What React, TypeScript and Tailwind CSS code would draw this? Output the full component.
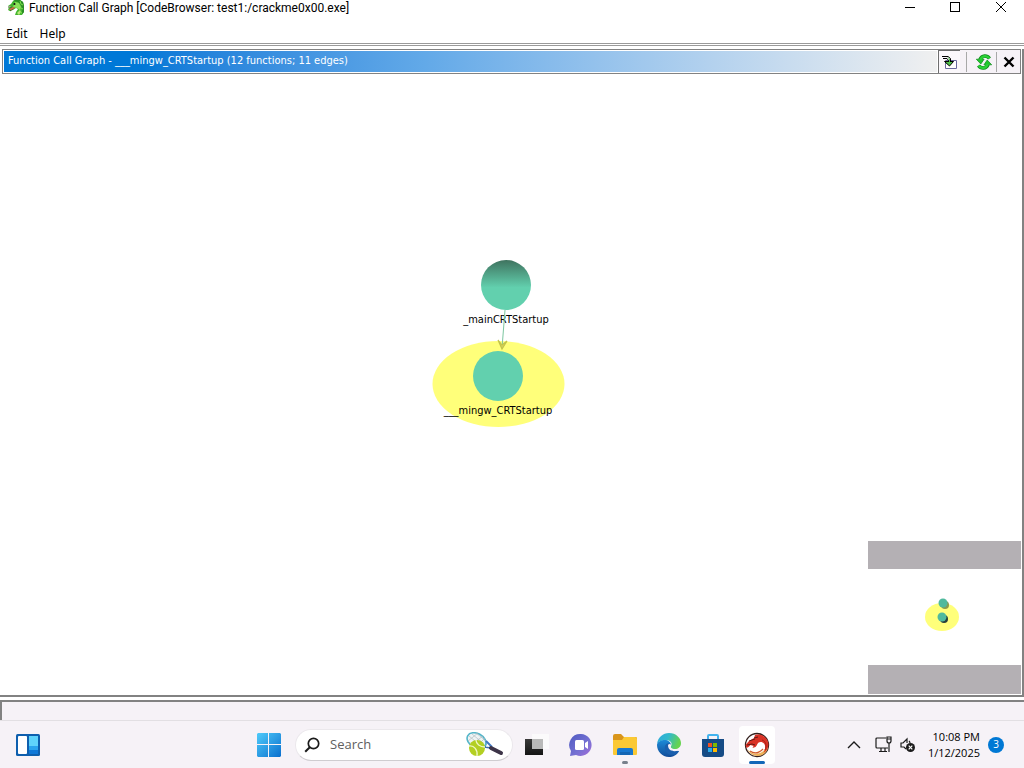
import React, { useState } from 'react';

const DragonIcon = () => (
  <svg width="17" height="16" viewBox="0 0 17 16" aria-hidden="true">
    <path d="M0 6 3 4 5 1l2-1h5l3 2 1 4v6l-2 3H7l1-3 2-3-2-1-3 2-4 1-1-2 2-2 2-1z" fill="#43b52e" />
    <path d="m5 1 2-1h5l3 2 1 4v6l-2 2V9l-1-4-3-3z" fill="#2b8c26" />
    <path d="m7 2 4 1 2 4-1 3-3-2-4-1z" fill="#8be05a" />
    <path d="m9 13 3-3 1 2-2 3z" fill="#b9e67a" />
    <path d="m12 1 1 3 2 1M13 8l2 1M12 12l2 1" stroke="#7be04c" fill="none" />
    <path d="M0 7h4M2 11l4-3" stroke="#3b5c1a" fill="none" />
    <circle cx="6.500" cy="4" r="1" fill="#111" />
    <path d="m1 10 2-2 3-1 1 1-4 2z" fill="#d9604a" />
  </svg>
);

const ImportIcon = () => (
  <svg width="16" height="16" viewBox="0 0 16 16" aria-hidden="true">
    <path d="M3.500 6.500h11v8h-11z" fill="#fff" stroke="#6a6a9e" />
    <path d="M0 2.500h6l2.500 2V8M1 4.500h4l1.500 2V8" fill="none" stroke="#000" />
    <path d="M2.500 7.500h9L7.500 12z" fill="#4fc04a" stroke="#000" />
    <path d="M6 3.500 7.500 5v4" fill="none" stroke="#4fc04a" />
  </svg>
);

const RefreshIcon = () => (
  <svg width="16" height="16" viewBox="0 0 16 16" aria-hidden="true">
    <g fill="none" stroke="#0e8a1b" strokeWidth="3.600">
      <path d="M13.500 4.500C11 1 6 1 4 5.500" />
      <path d="M2.500 11.500C5 15 10 15 12 10.500" />
    </g>
    <path d="M.3 5.200h7.800L4.800 10zM15.700 10.800H7.900L11.200 6z" fill="#1fc72b" stroke="#0e8a1b" strokeWidth=".7" />
    <g fill="none" stroke="#2bd236" strokeWidth="2.400">
      <path d="M13.200 4.200C11 1.200 6 1.200 4.200 6" />
      <path d="M2.800 11.800C5 14.800 10 14.800 11.800 10" />
    </g>
  </svg>
);

const WidgetsIcon = () => (
  <svg width="24" height="22" viewBox="0 0 24 22" aria-hidden="true">
    <rect width="24" height="22" rx="1.500" fill="#0e5fae" />
    <rect x="2" y="2" width="9" height="18" rx="1" fill="#fff" />
    <rect x="13" y="2" width="9" height="10" fill="#5fd3fb" />
    <path d="M13 12h9v8h-9z" fill="#2aa4ee" />
    <path d="M13 16h9v4h-9z" fill="#0f78d8" />
  </svg>
);

const StartIcon = () => (
  <svg width="24" height="24" viewBox="0 0 24 24" aria-hidden="true">
    <defs>
      <linearGradient id="start" x1="0" y1="0" x2="1" y2="1">
        <stop offset="0" stopColor="#4fcbfa" />
        <stop offset="1" stopColor="#0a6fce" />
      </linearGradient>
    </defs>
    <path d="M1 0h10v11H0V1zM12 0h11l1 1v10H12zM0 12h11v12H1l-1-1zM12 12h12v11l-1 1H12z" fill="url(#start)" />
  </svg>
);

const SearchIcon = () => (
  <svg width="16" height="16" viewBox="0 0 16 16" fill="none" stroke="#1b1b1b" aria-hidden="true">
    <circle cx="9.500" cy="6.500" r="5.200" strokeWidth="1.700" />
    <path d="m5.800 10.200-4.600 4.600" strokeWidth="2" />
  </svg>
);

const RacketIcon = () => (
  <svg width="38" height="26" viewBox="0 0 38 26" aria-hidden="true">
    <path d="M15 16c4 1 6-3 4-7M18 15l7 1" stroke="#3c6db0" strokeWidth="1.500" fill="none" />
    <ellipse cx="10.500" cy="8.500" rx="10" ry="7" transform="rotate(28 10.500 8.500)" fill="#eef3f4" stroke="#53b5c9" strokeWidth="1.600" />
    <path d="m3 4 12 10M6 2l12 10M10 1l10 8M2 9 12 1M5 13 17 4M11 14l8-8" stroke="#a8b3b8" strokeWidth=".6" />
    <path d="m20 9 6 6" stroke="#4077c0" strokeWidth="2" />
    <path d="m25 16 10 5" stroke="#3d3448" strokeWidth="4" strokeLinecap="round" />
    <circle cx="11" cy="16" r="8" fill="#b3cf22" />
    <path d="M3 14c5-1 9 4 8 10M10 8c0 4 4 7 9 7" stroke="#eef7c1" strokeWidth="1.300" fill="none" />
  </svg>
);

const TaskViewIcon = () => (
  <svg width="26" height="22" viewBox="0 0 26 22" aria-hidden="true">
    <defs>
      <linearGradient id="taskView" x1="0" y1="0" x2="0" y2="1">
        <stop offset="0" stopColor="#3a3a3a" />
        <stop offset="1" stopColor="#141414" />
      </linearGradient>
    </defs>
    <path d="M8 0h17v15H8z" fill="#fbfafb" />
    <path d="M1 5h18v16H1z" fill="url(#taskView)" />
    <path d="M8 5h11v10H8z" fill="#b9b9b9" />
  </svg>
);

const ChatIcon = () => (
  <svg width="24" height="24" viewBox="0 0 24 24" aria-hidden="true">
    <defs>
      <linearGradient id="chat" x1="0" y1="0" x2="1" y2="1">
        <stop offset="0" stopColor="#4e5bc1" />
        <stop offset=".6" stopColor="#7671d3" />
        <stop offset="1" stopColor="#a56bd8" />
      </linearGradient>
    </defs>
    <path d="M12 1a11 11 0 1 1-5 21L1 23l1-5A11 11 0 0 1 12 1" fill="url(#chat)" />
    <rect x="6" y="7" width="9" height="10" rx="1.500" fill="#fff" />
    <path d="m16 10 3-2v8l-3-2z" fill="#fff" />
  </svg>
);

const FolderIcon = () => (
  <svg width="24" height="22" viewBox="0 0 24 22" aria-hidden="true">
    <path d="M0 2Q0 0 2 0h6l3 3h12q1 0 1 2v4H0z" fill="#d9951b" />
    <path d="M0 6h9l2-3h11q2 0 2 2v15q0 1-1 1H1q-1 0-1-1z" fill="#fbc935" />
    <path d="M4 21v-5q0-2 2-2h12q2 0 2 2v5z" fill="#1878d0" />
    <path d="M7 18h10v3H7z" fill="#1466b4" />
  </svg>
);

const EdgeIcon = () => (
  <svg width="24" height="24" viewBox="0 0 24 24" aria-hidden="true">
    <defs>
      <linearGradient id="edgeTop" x1="0" y1="0" x2="1" y2=".3">
        <stop offset="0" stopColor="#2da9dd" />
        <stop offset=".5" stopColor="#32b9cb" />
        <stop offset="1" stopColor="#65d34f" />
      </linearGradient>
      <linearGradient id="edgeLow" x1="0" y1="0" x2="0" y2="1">
        <stop offset="0" stopColor="#1c8bd8" />
        <stop offset="1" stopColor="#124c99" />
      </linearGradient>
    </defs>
    <path d="M0 11C1 4 6 0 12 0c7 0 12 5 12 10 0 4-3 6-6 6s-5-1-4-3c2-3-1-6-5-6-4 0-8 2-9 4" fill="url(#edgeTop)" />
    <path d="M0 12c0-3 4-5 8-5 3 0 6 2 6 5-3 0-6 9 8 6-2 4-6 6-10 6C5 24 0 18 0 12" fill="url(#edgeLow)" />
    <path d="M8 13c1-3 4-4 6-1-2 3 0 6 8 6-1 2-4 4-7 4-5 0-8-5-7-9" fill="#1a5fad" />
    <path d="M11 12c1-2 4-1 3 1-1 3 4 5 9 3-2 3-12 4-12-4" fill="#f6f2f7" />
  </svg>
);

const StoreIcon = () => (
  <svg width="24" height="24" viewBox="0 0 24 24" aria-hidden="true">
    <path d="M7 7V3q0-1 1-1h8q1 0 1 1v4" fill="none" stroke="#42b3ee" strokeWidth="2" />
    <path d="M1 6h22v15q0 3-3 3H4q-3 0-3-3z" fill="#164b85" />
    <path d="M7 10h4v4H7z" fill="#f25022" />
    <path d="M12 10h4v4h-4z" fill="#7fba00" />
    <path d="M7 15h4v4H7z" fill="#29abeb" />
    <path d="M12 15h4v4h-4z" fill="#ffb900" />
  </svg>
);

const GhidraIcon = () => (
  <svg width="26" height="26" viewBox="0 0 26 26" aria-hidden="true">
    <circle cx="13" cy="13" r="11.500" fill="#fff" stroke="#33201d" strokeWidth="1.300" />
    <path d="M3 17c4 5 10 6 15 3 3-2 5-6 5-9 3 6-2 13-9 13-5 0-9-3-11-7" fill="#edb25b" />
    <path d="M1.500 13 5 9l5-3 1-3c7-2 13 3 13.500 9 0 4-2 7-5 9 3-5 2-11-3-11-3 0-3 3-5 5l-3 1 1-2-3-1-2 2-2 1z" fill="#d93225" />
    <path d="m5 9 6-2M10 6l4-1M3 13l5-1 3 1" stroke="#611b17" fill="none" />
    <path d="M18 8c4 1 5 6 3 10" stroke="#a51d18" fill="none" />
    <path d="M6 19c4 3 9 2 13-2" stroke="#d15b2b" strokeWidth="1.200" fill="none" />
  </svg>
);

const NetworkIcon = () => (
  <svg width="17" height="17" viewBox="0 0 17 17" fill="none" stroke="#1b1b1b" strokeWidth="1.200" aria-hidden="true">
    <path d="M11 2H2Q1 2 1 3v8q0 1 1 1h11M4 15.500h8M6 12v3M10 12v3M14 7v9" />
    <path d="M12 1h4v4q0 2-2 2t-2-2zM12 3h4" />
  </svg>
);

const MutedIcon = () => (
  <svg width="16" height="16" viewBox="0 0 16 16" aria-hidden="true">
    <path d="M6 12 4 10H1V6h2l4-4v4M9 4q1 1 1 2" fill="none" stroke="#1b1b1b" strokeWidth="1.200" />
    <circle cx="10.500" cy="10.500" r="4.500" fill="#1b1b1b" />
    <path d="m8.700 8.700 3.600 3.600m0-3.600-3.600 3.600" stroke="#fff" strokeWidth="1.200" />
  </svg>
);

const GraphView = () => (
  <svg width="160" height="253" viewBox="431 258 160 253" role="img" aria-label="Function call graph">
    <defs>
      <linearGradient id="node" x1="0" y1="0" x2="0" y2="1">
        <stop offset="0" stopColor="#3f735f" />
        <stop offset=".55" stopColor="#62d0ae" />
      </linearGradient>
    </defs>
    <ellipse cx="498.500" cy="384" rx="66" ry="43" fill="#ffff7a" />
    <circle cx="506" cy="285" r="25" fill="url(#node)" />
    <circle cx="498" cy="376" r="25" fill="#62d0ae" />
    <g className="text-[11px] font-['DejaVu_Sans_Condensed','DejaVu_Sans',sans-serif]" fill="#000" textAnchor="middle">
      <text x="506" y="323">_mainCRTStartup</text>
      <text x="498" y="414">___mingw_CRTStartup</text>
    </g>
    <path d="m505 310-3 38" stroke="#7cc6a0" fill="none" />
    <path d="m498 340 4 9 5-8-5 4z" stroke="#c3c34a" strokeWidth="1.200" fill="#d3d35a" />
  </svg>
);

const Satellite = () => (
  <div className="absolute right-px bottom-px w-[153px] bg-white">
    <div className="h-7 bg-[#b4b0b4]" />
    <svg className="block w-full" height="96" viewBox="868 569 153 96" aria-hidden="true">
      <ellipse cx="942" cy="617" rx="17" ry="14" fill="#ffff7a" />
      <circle cx="945" cy="605" r="4" fill="#8a9a4e" />
      <circle cx="943" cy="603" r="4.500" fill="#4fb99d" />
      <circle cx="944" cy="619" r="4" fill="#26403c" />
      <circle cx="942" cy="617" r="4.500" fill="#4fb99d" />
    </svg>
    <div className="h-[29px] bg-[#b4b0b4]" />
  </div>
);

const apps = [
  { name: 'Task View', icon: <TaskViewIcon /> },
  { name: 'Chat', icon: <ChatIcon /> },
  { name: 'File Explorer', icon: <FolderIcon />, running: true },
  { name: 'Microsoft Edge', icon: <EdgeIcon /> },
  { name: 'Microsoft Store', icon: <StoreIcon /> },
  { name: 'Ghidra', icon: <GhidraIcon />, active: true },
];

const App: React.FC = () => {
  const [search, setSearch] = useState('');

  return (
    <div className="min-h-screen flex flex-col bg-white text-black font-['Open_Sans','Noto_Sans',sans-serif]">

      {/* Title bar */}
      <header className="h-5 flex items-start justify-between pl-2">
        <div className="flex items-start gap-1">
          <DragonIcon />
          <h1 className="text-[12px] leading-4 whitespace-nowrap font-['Roboto',sans-serif]">Function Call Graph [CodeBrowser: test1:/crackme0x00.exe]</h1>
        </div>
        <div className="flex">
          <button type="button" aria-label="Minimize" className="w-[45px] h-4 flex items-center justify-center">
            <svg width="12" height="12" viewBox="0 0 12 12"><path d="M0 5.500h10" stroke="#000" /></svg>
          </button>
          <button type="button" aria-label="Maximize" className="w-[45px] h-4 flex items-center justify-center">
            <svg width="12" height="12" viewBox="0 0 12 12"><rect x=".5" y=".5" width="9" height="9" fill="none" stroke="#000" /></svg>
          </button>
          <button type="button" aria-label="Close" className="w-[46px] h-4 flex items-center justify-center">
            <svg width="12" height="12" viewBox="0 0 12 12"><path d="m1 0 10 10M11 0 1 10" stroke="#000" /></svg>
          </button>
        </div>
      </header>

      <nav className="h-[23px] flex items-center gap-3 px-1.5 pt-1 text-[12px] leading-4 font-['Noto_Sans',sans-serif]">
        <button type="button">Edit</button>
        <button type="button">Help</button>
      </nav>
      <div className="h-[3px] border-y border-[#9a9a9a]" />

      {/* Graph panel */}
      <main className="flex-1 flex flex-col mt-[3px] border-r-2 border-b-2 border-[#828282]">
        <div className="h-[25px] ml-0.5 mr-px flex border border-[#828282]">
          <h2 className="flex-1 flex items-center px-1 text-[11px] text-white whitespace-nowrap border border-white bg-linear-to-r from-[#0078d7] from-15% via-[#62a9e8] via-45% to-[#f0f0f0] to-100% font-['DejaVu_Sans_Condensed','DejaVu_Sans',sans-serif]">
            Function Call Graph - ___mingw_CRTStartup (12 functions; 11 edges)
          </h2>
          <div className="flex items-center bg-[#f6f2f7]">
            <button type="button" aria-label="Navigate on incoming location" aria-pressed="true" className="w-[22px] h-full flex items-center justify-center border-l border-t border-[#6e6e6e] bg-[#fbf8fb]">
              <ImportIcon />
            </button>
            <div className="w-px h-5 ml-1.5 bg-[#a8a8a8]" />
            <button type="button" aria-label="Refresh" className="w-[29px] pl-1 flex items-center justify-center">
              <RefreshIcon />
            </button>
            <div className="w-px h-5 bg-[#a8a8a8]" />
            <button type="button" aria-label="Close panel" className="w-[23px] flex items-center justify-center">
              <svg width="12" height="12" viewBox="0 0 12 12"><path d="m1.500 1.500 9 9m0-9-9 9" stroke="#000" strokeWidth="2.400" /></svg>
            </button>
          </div>
        </div>
        <div className="relative flex-1 flex items-center justify-center">
          <GraphView />
          <Satellite />
        </div>
      </main>

      <div className="h-5 mt-[3px] border-t-2 border-l-2 border-[#828282] bg-[#f6f2f7]" />

      {/* Taskbar */}
      <footer className="h-12 flex items-center justify-between border-t border-[#e2dfe3] bg-[#f6f2f7]">
        <div className="flex-1 pl-4">
          <button type="button" aria-label="Widgets" className="block"><WidgetsIcon /></button>
        </div>
        <div className="flex items-center pl-4">
          <button type="button" aria-label="Start" className="mr-3.5"><StartIcon /></button>
          <label className="w-[218px] h-8 mr-0.5 flex items-center gap-2.5 pl-2 pr-2 rounded-full border border-[#ebe8ec] border-b-[#cfccd0] bg-white">
            <SearchIcon />
            <input
              type="text"
              aria-label="Search"
              placeholder="Search"
              value={search}
              onChange={(e) => setSearch(e.target.value)}
              className="flex-1 min-w-0 text-[13px] bg-transparent outline-none placeholder:text-[#606060]"
            />
            <RacketIcon />
          </label>
          {apps.map((app) => (
            <button
              key={app.name}
              type="button"
              aria-label={app.name}
              className="w-11 h-10 flex items-center justify-center"
            >
              <span className={`relative w-9 h-[38px] flex items-center justify-center rounded ${app.active ? 'bg-white' : ''}`}>
                {app.icon}
                {app.running && <span className="absolute bottom-0 w-1.5 h-[3px] rounded-full bg-[#78808c]" />}
                {app.active && <span className="absolute bottom-0 w-4 h-[3px] rounded-full bg-[#1267b8]" />}
              </span>
            </button>
          ))}
        </div>
        <div className="flex-1 flex items-center justify-end pr-5">
          <button type="button" aria-label="Show hidden icons" className="mr-3.5">
            <svg width="14" height="14" viewBox="0 0 14 14"><path d="m1 10 6-6 6 6" fill="none" stroke="#1b1b1b" strokeWidth="1.400" /></svg>
          </button>
          <button type="button" aria-label="Network" className="mr-2"><NetworkIcon /></button>
          <button type="button" aria-label="Volume muted" className="mr-3"><MutedIcon /></button>
          <div className="text-right text-[11px] leading-4 whitespace-nowrap">
            <div>10:08 PM</div>
            <div>1/12/2025</div>
          </div>
          <span className="ml-2 size-4 flex items-center justify-center rounded-full bg-[#0078d4] text-[10px] text-white">3</span>
        </div>
      </footer>
    </div>
  );
};

export default App;
